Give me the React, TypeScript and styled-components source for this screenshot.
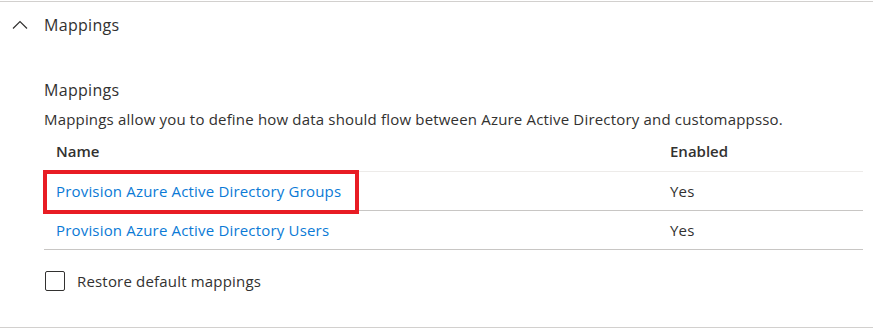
import React from "react";
import styled, { createGlobalStyle } from "styled-components";

const Global = createGlobalStyle`
  html, body { margin: 0; padding: 0; background: #ffffff; }
  body { font-family: "Open Sans", "Noto Sans", sans-serif; color: #323130; }
`;

const Section = styled.section`
  width: 873px;
  margin-top: 1px;
  border-top: 1px solid #d2d0ce;
  border-bottom: 1px solid #d2d0ce;
  box-sizing: border-box;
`;

const Header = styled.div`
  height: 46px;
  display: flex;
  align-items: center;
  padding-left: 12px;
  gap: 16px;
`;

const Title = styled.span`
  font-size: 16px;
  line-height: 22px;
  letter-spacing: 0.3px;
`;

const Body = styled.div`
  padding: 31px 10px 36px 44px;
  font-size: 15px;
  letter-spacing: 0.18px;
`;

const SubTitle = styled.div`
  font-size: 16px;
  line-height: 22px;
  letter-spacing: 0.3px;
`;

const Description = styled.div`
  margin-top: 8px;
  line-height: 20px;
`;

const Table = styled.div`
  margin-top: 2px;
  width: 819px;
`;

const Row = styled.div<{ $head?: boolean }>`
  display: grid;
  grid-template-columns: 614px 1fr;
  height: ${(p) => (p.$head ? "40px" : "38px")};
  border-bottom: 1px solid ${(p) => (p.$head ? "#edebe9" : "#c8c6c4")};
  font-weight: ${(p) => (p.$head ? 600 : 400)};
  letter-spacing: ${(p) => (p.$head ? "0" : "0.18px")};
`;

const Cell = styled.div<{ $marked?: boolean }>`
  position: relative;
  display: flex;
  align-items: center;
  padding-left: 12px;
  line-height: 20px;
  ${(p) =>
    p.$marked &&
    `
    &::after {
      content: "";
      position: absolute;
      left: -1px;
      top: -2px;
      width: 316px;
      height: 44px;
      box-sizing: border-box;
      border: 4px solid #e81c24;
      pointer-events: none;
    }
  `}
`;

const Link = styled.a`
  color: #0b7ad6;
  text-decoration: none;
  cursor: pointer;
`;

const CheckRow = styled.label`
  margin-top: 21px;
  display: flex;
  align-items: center;
  gap: 12px;
  line-height: 20px;
  padding-left: 1px;
`;

const Box = styled.span`
  width: 20px;
  height: 20px;
  box-sizing: border-box;
  border: 1px solid #323130;
  border-radius: 2px;
`;

const Chevron = () => (
  <svg width="16" height="10" viewBox="0 0 16 10" aria-hidden>
    <polyline points="1,8.5 8,1.5 15,8.5" fill="none" stroke="#323130" strokeWidth="1.2" />
  </svg>
);

const rows = [
  { name: "Provision Azure Active Directory Groups", enabled: "Yes", marked: true },
  { name: "Provision Azure Active Directory Users", enabled: "Yes", marked: false },
];

export default function App() {
  return (
    <>
      <Global />
      <Section>
        <Header>
          <Chevron />
          <Title>Mappings</Title>
        </Header>
        <Body>
          <SubTitle>Mappings</SubTitle>
          <Description>
            Mappings allow you to define how data should flow between Azure Active Directory and customappsso.
          </Description>
          <Table>
            <Row $head>
              <Cell>Name</Cell>
              <Cell>Enabled</Cell>
            </Row>
            {rows.map((r) => (
              <Row key={r.name}>
                <Cell $marked={r.marked}>
                  <Link>{r.name}</Link>
                </Cell>
                <Cell>{r.enabled}</Cell>
              </Row>
            ))}
          </Table>
          <CheckRow>
            <Box />
            <span>Restore default mappings</span>
          </CheckRow>
        </Body>
      </Section>
    </>
  );
}
